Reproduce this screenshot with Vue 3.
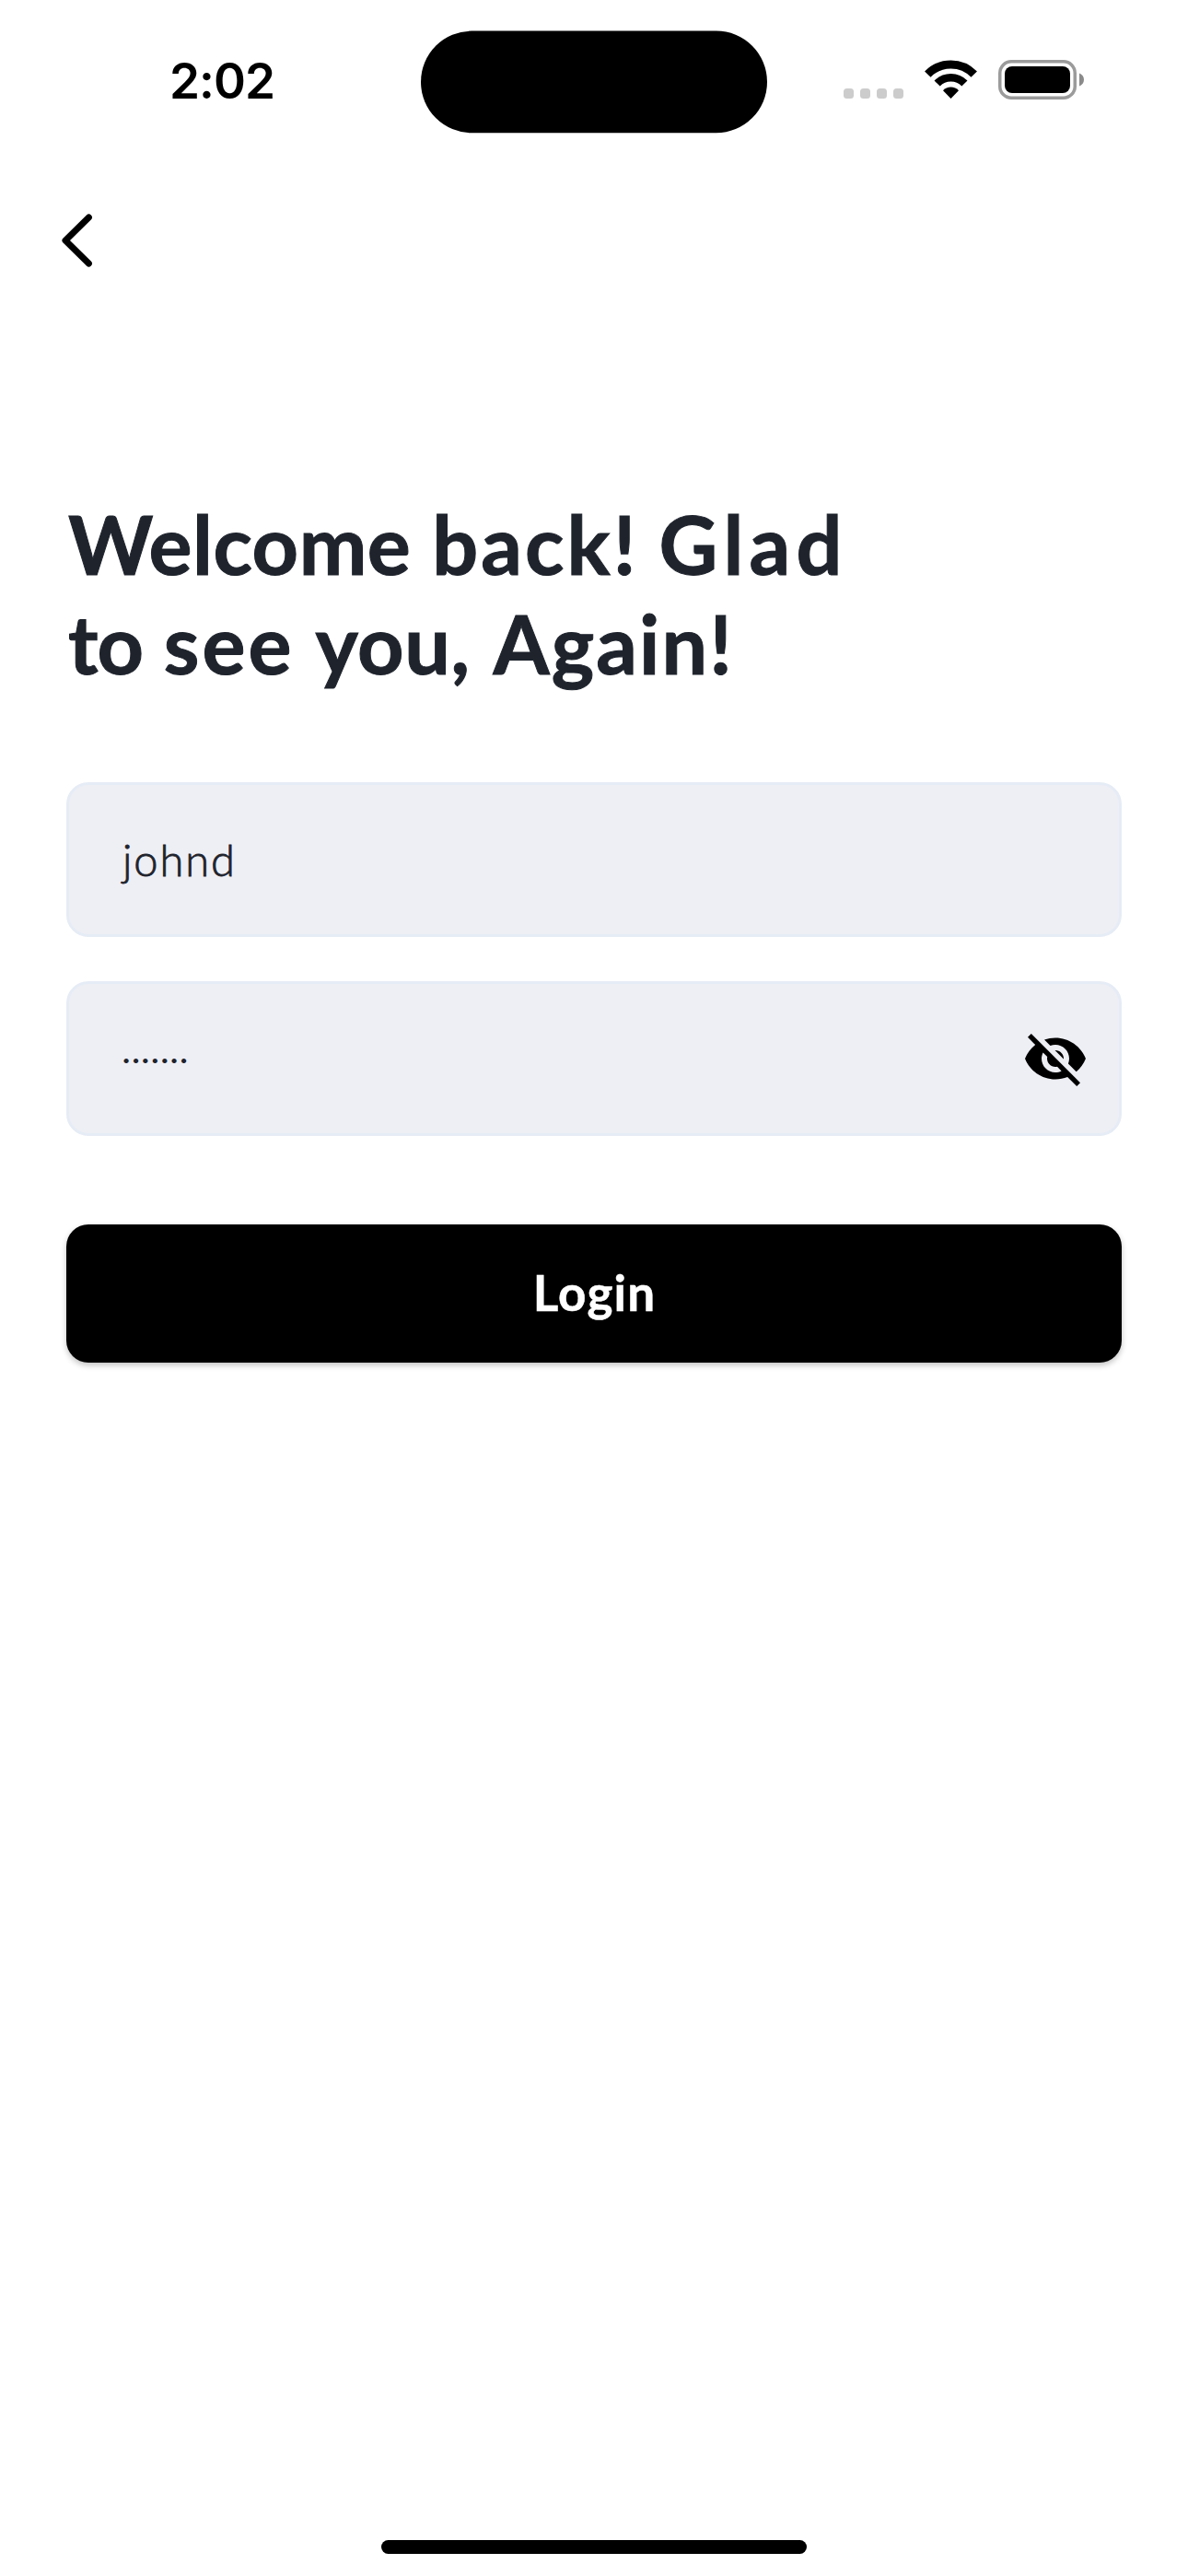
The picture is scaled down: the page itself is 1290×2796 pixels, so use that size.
<script setup>
import { ref } from 'vue'

const username = ref('johnd')
const passwordLength = ref(7)
</script>

<template>
  <main class="screen">
    <header class="status">
      <div class="time">2:02</div>
      <svg class="island" viewBox="0 0 376 112">
        <rect x="0" y="0.6" width="376" height="110.7" rx="55.35" />
      </svg>
      <div class="indicators">
        <div class="cellular"><i v-for="n in 4" :key="n"></i></div>
        <svg class="wifi" viewBox="0 0 57 43" fill="none" stroke="#000">
          <path d="M3.3 15.7A35 35 0 0 1 53.7 15.7" stroke-width="9" />
          <path d="M13.6 25.6A20.7 20.7 0 0 1 43.4 25.6" stroke-width="8.6" />
          <path d="M28.5 42L20 33.2A11.5 11.5 0 0 1 37 33.2Z" fill="#000" stroke="none" />
        </svg>
        <svg class="battery" viewBox="0 0 94 43">
          <rect x="1.75" y="1.75" width="81.5" height="39.5" rx="12.5" fill="none" stroke="#9b9b9b" stroke-width="3.5" />
          <rect x="7" y="7" width="71" height="29" rx="8" />
          <path d="M88 14.5C91.2 15.8 93 18.4 93 21.5S91.2 27.2 88 28.5Z" fill="#8a8a8a" />
        </svg>
      </div>
    </header>

    <nav class="nav">
      <svg class="back" viewBox="0 0 34 58" fill="none" stroke="#000" stroke-width="7" stroke-linecap="round" stroke-linejoin="round">
        <path d="M29.4 4L4 29L29.4 54" />
      </svg>
    </nav>

    <h1 class="title">
      <span class="line">Welcome <span class="back-word">back!</span> <span class="glad">Glad</span></span>
      <span class="line"><span class="to">to</span> <span class="see">see</span> <span class="you">you,</span> <span class="again">Again!</span></span>
    </h1>

    <form class="form">
      <div class="field"><span class="value">{{ username }}</span></div>
      <div class="field">
        <span class="dots">{{ '•'.repeat(passwordLength) }}</span>
        <svg class="eye" viewBox="0 0 24 24">
          <path d="M12 7c2.76 0 5 2.24 5 5 0 .65-.13 1.26-.36 1.83l2.92 2.92c1.51-1.26 2.7-2.89 3.43-4.75-1.73-4.39-6-7.5-11-7.5-1.4 0-2.74.25-3.98.7l2.16 2.16C10.74 7.13 11.35 7 12 7zM2 4.27l2.28 2.28.46.46C3.08 8.3 1.78 10.02 1 12c1.73 4.39 6 7.5 11 7.5 1.55 0 3.03-.3 4.38-.84l.42.42L19.73 22 21 20.73 3.27 3 2 4.27zM7.53 9.8l1.55 1.55c-.05.21-.08.43-.08.65 0 1.66 1.34 3 3 3 .22 0 .44-.03.65-.08l1.55 1.55c-.67.33-1.41.53-2.2.53-2.76 0-5-2.24-5-5 0-.79.2-1.53.53-2.2zm4.31-.78l3.15 3.15.02-.16c0-1.66-1.34-3-3-3l-.17.01z" />
        </svg>
      </div>
      <button class="login" type="button">Login</button>
    </form>

    <div class="home"></div>
  </main>
</template>

<style>
body {
  background: #fff;
}
</style>

<style scoped>
.screen {
  box-sizing: border-box;
  display: flex;
  flex-direction: column;
  width: 1290px;
  height: 2796px;
  padding-bottom: 24px;
  overflow: hidden;
  background: #fff;
  font-family: Lato, "Liberation Sans", sans-serif;
  color: #1e232c;
}
.status {
  display: grid;
  grid-template-columns: 457px 376px 457px;
  height: 177px;
  padding-top: 33px;
  box-sizing: border-box;
}
.time {
  padding-left: 184px;
  height: 111px;
  font: 600 53px/111px Inter, sans-serif;
  letter-spacing: -1px;
  color: #000;
}
.island {
  display: block;
  width: 376px;
  height: 112px;
}
.indicators {
  display: flex;
  align-items: flex-end;
  height: 75px;
  padding-left: 83px;
}
.cellular {
  display: flex;
  gap: 7px;
  padding-bottom: 1px;
}
.cellular i {
  width: 11px;
  height: 11px;
  border-radius: 3.5px;
  background: #ccc;
}
.wifi {
  width: 57px;
  height: 43px;
  margin-left: 23px;
}
.battery {
  width: 94px;
  height: 43px;
  margin-left: 23px;
}
.nav {
  height: 359px;
  padding: 55px 0 0 67px;
  box-sizing: border-box;
}
.back {
  display: block;
  width: 34px;
  height: 58px;
}
.title {
  margin: 0;
  padding-left: 74px;
  font-size: 88px;
  line-height: 108px;
  font-weight: 700;
  letter-spacing: 0.5px;
  -webkit-text-stroke: 1px #1e232c;
}
.line {
  display: block;
  white-space: nowrap;
}
.back-word {
  margin-left: 1px;
  letter-spacing: 3.1px;
}
.glad {
  letter-spacing: 6.3px;
}
.to {
  letter-spacing: -1px;
}
.see {
  margin: 0 1px;
  letter-spacing: 3px;
}
.you {
  margin-right: 3px;
  letter-spacing: 0.6px;
}
.again {
  letter-spacing: 2.1px;
}
.form {
  display: flex;
  flex-direction: column;
  gap: 48px;
  padding: 97px 72px 0;
}
.field {
  display: flex;
  align-items: center;
  justify-content: space-between;
  box-sizing: border-box;
  height: 168px;
  padding: 0 33px 0 58px;
  border: 3px solid #e6ecf5;
  border-radius: 24px;
  background: #eeeff5;
}
.value {
  font-size: 47px;
  line-height: 60px;
  font-weight: 300;
  letter-spacing: 1.9px;
  -webkit-text-stroke: 0.8px #1e232c;
}
.dots {
  padding-top: 3px;
  font: 400 14px/20px Lato, sans-serif;
  letter-spacing: 2.3px;
}
.eye {
  width: 72px;
  height: 72px;
  fill: #000;
}
.login {
  height: 150px;
  margin-top: 48px;
  padding: 0 0 0 1px;
  border: 0;
  border-radius: 24px;
  background: #000;
  color: #fff;
  font: 700 53px/145px Lato, sans-serif;
  letter-spacing: 1.2px;
  -webkit-text-stroke: 0.5px #fff;
  box-shadow: 0 3px 6px rgba(0, 0, 0, 0.24);
}
.login::after {
  content: "";
  display: block;
  height: 4px;
}
.home {
  align-self: center;
  width: 462px;
  height: 15px;
  margin-top: auto;
  border-radius: 8px;
  background: #000;
}
</style>
